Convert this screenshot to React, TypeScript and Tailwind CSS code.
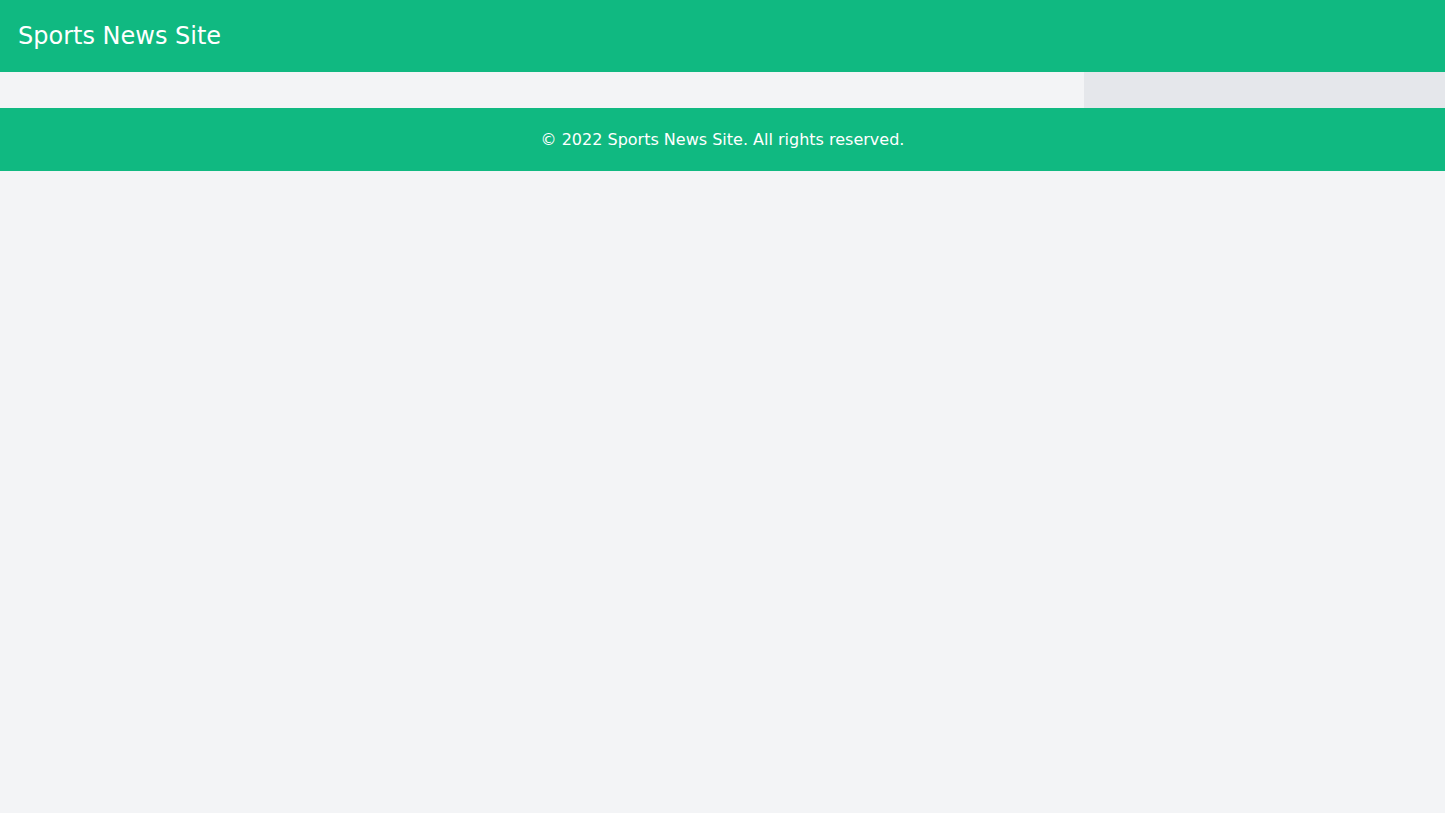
export default function App() {
  return (
    <div className="min-h-screen bg-[#f3f4f6] text-white font-['DejaVu_Sans',sans-serif]">
      <header className="bg-[#10b981] px-[18px] py-5">
        <h1 className="text-2xl leading-8">Sports News Site</h1>
      </header>
      <div className="flex">
        <main className="flex-1 py-[18px]"></main>
        <aside className="w-1/4 bg-[#e5e7eb] py-[18px]"></aside>
      </div>
      <footer className="bg-[#10b981] py-[19.5px] text-center">
        <p className="text-base leading-6">© 2022 Sports News Site. All rights reserved.</p>
      </footer>
    </div>
  );
}
